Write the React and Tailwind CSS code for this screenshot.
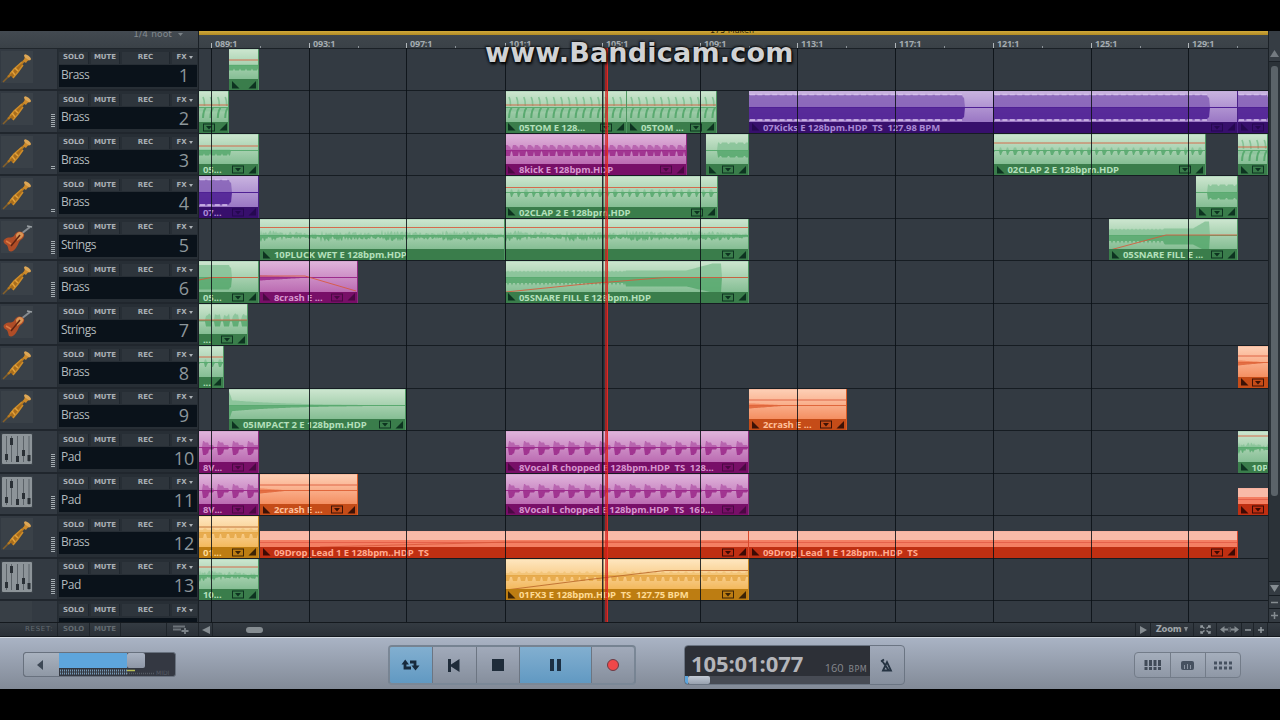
import React from 'react';

const tracks = [
  { name: 'Brass', icon: 'brass', level: 0 },
  { name: 'Brass', icon: 'brass', level: 7 },
  { name: 'Brass', icon: 'brass', level: 2 },
  { name: 'Brass', icon: 'brass', level: 2 },
  { name: 'Strings', icon: 'strings', level: 7 },
  { name: 'Brass', icon: 'brass', level: 8 },
  { name: 'Strings', icon: 'strings', level: 0 },
  { name: 'Brass', icon: 'brass', level: 0 },
  { name: 'Brass', icon: 'brass', level: 0 },
  { name: 'Pad', icon: 'pad', level: 7 },
  { name: 'Pad', icon: 'pad', level: 7 },
  { name: 'Brass', icon: 'brass', level: 8 },
  { name: 'Pad', icon: 'pad', level: 8 },
];

const palette = {
  green: {
    body: 'bg-gradient-to-b from-[#cbe5ce] to-[#85be94]',
    label: 'bg-[#3a7d4b] text-[#b4e0bb]',
    edge: 'border-[#4f9762]',
    up: '#86c296', down: '#5aaa70', ink: '#0d3320',
  },
  purple: {
    body: 'bg-gradient-to-b from-[#c8b2df] to-[#9a77c4]',
    label: 'bg-[#370f6c] text-[#a988d4]',
    edge: 'border-[#4a2188]',
    up: '#8560b6', down: '#4f2094', ink: '#250850',
  },
  magenta: {
    body: 'bg-gradient-to-b from-[#dfb3db] to-[#bb6bb2]',
    label: 'bg-[#780f68] text-[#d795ce]',
    edge: 'border-[#8d2a7e]',
    up: '#b45caa', down: '#9c2c8c', ink: '#4a0843',
  },
  orange: {
    body: 'bg-gradient-to-b from-[#fdceb4] to-[#f48f61]',
    label: 'bg-[#c54c18] text-[#ffc09a]',
    edge: 'border-[#d95c26]',
    up: '#f08357', down: '#e0673c', ink: '#3d1206',
  },
  red: {
    body: 'bg-gradient-to-b from-[#f9baa8] from-50% to-[#f47f63] to-55%',
    label: 'bg-[#bf2f12] text-[#ffab90]',
    edge: 'border-[#d9482c]',
    up: '#e5604a', down: '#e5604a', ink: '#3d0a04',
  },
  yellow: {
    body: 'bg-gradient-to-b from-[#fee5bd] to-[#f3b95c]',
    label: 'bg-[#bd7d12] text-[#ffdb94]',
    edge: 'border-[#c98a22]',
    up: '#f2c376', down: '#e6a949', ink: '#3c2406',
  },
};

// x is measured from the left edge of the timeline, line is the automation curve
const lanes = [
  [{ x: 30, w: 30, c: 'green', wave: 'under', line: [10], noMenu: true }],
  [
    { x: 0, w: 30, c: 'green', wave: 'tom', line: [13], open: true },
    { x: 306, w: 122, c: 'green', wave: 'tom', line: [13], text: '05TOM E 128...' },
    { x: 428, w: 90, c: 'green', wave: 'tom', line: [13], text: '05TOM ...' },
    { x: 550, w: 244.5, c: 'purple', wave: 'full', cut: 215, text: '07Kicks E 128bpm.HDP  TS  127.98 BPM', noMenu: true, noEnd: true },
    { x: 794.5, w: 244, c: 'purple', wave: 'full', cut: 215, open: true },
    { x: 1038.5, w: 31, c: 'purple', wave: 'full', cut: 31, noEnd: true },
  ],
  [
    { x: 0, w: 60, c: 'green', wave: 'under', cut: 31, line: [11], text: '05...', open: true },
    { x: 306, w: 182, c: 'magenta', wave: 'kick', text: '8kick E 128bpm.HDP' },
    { x: 507, w: 43, c: 'green', wave: 'block' },
    { x: 794.5, w: 212, c: 'green', wave: 'clap', line: [8], text: '02CLAP 2 E 128bpm.HDP' },
    { x: 1039, w: 30, c: 'green', wave: 'tom', line: [12], noEnd: true },
  ],
  [
    { x: 0, w: 60, c: 'purple', wave: 'full', cut: 32, text: '07...', open: true },
    { x: 306, w: 212.5, c: 'green', wave: 'clap', line: [10.5], text: '02CLAP 2 E 128bpm.HDP' },
    { x: 996.5, w: 42, c: 'green', wave: 'block' },
  ],
  [
    { x: 61, w: 245, c: 'green', wave: 'pluck', line: [7.5], text: '10PLUCK WET E 128bpm.HDP', noMenu: true, noEnd: true },
    { x: 306, w: 244, c: 'green', wave: 'pluck', line: [7.5], open: true },
    { x: 910, w: 128.5, c: 'green', wave: 'snare', cut: 100, line: [1, 30, 57, 15, 128, 15], text: '05SNARE FILL E ...' },
  ],
  [
    { x: 0, w: 60, c: 'green', wave: 'full', cut: 32, plain: true, line: [0, 18, 12, 15.5, 60, 15.5], text: '05...', open: true },
    { x: 61, w: 97.5, c: 'magenta', wave: 'crash', line: [0, 14, 45, 14, 96, 29], text: '8crash E ...' },
    { x: 306, w: 244, c: 'green', wave: 'snare', cut: 216, line: [1, 30, 80, 22, 160, 15.5, 244, 15.5], text: '05SNARE FILL E 128bpm.HDP' },
  ],
  [{ x: 0, w: 49, c: 'green', wave: 'wobble', line: [15], text: '...', open: true }],
  [
    { x: 0, w: 25, c: 'green', wave: 'clap', line: [10], text: '...', open: true, noMenu: true },
    { x: 1038.5, w: 31, c: 'orange', wave: 'crash', line: [9], noEnd: true },
  ],
  [
    { x: 30, w: 177, c: 'green', wave: 'impact', text: '05IMPACT 2 E 128bpm.HDP' },
    { x: 550, w: 98, c: 'orange', wave: 'crash', cut: 40, line: [10], text: '2crash E ...' },
  ],
  [
    { x: 0, w: 60, c: 'magenta', wave: 'vocal', text: '8V...', open: true },
    { x: 306, w: 244, c: 'magenta', wave: 'vocal', text: '8Vocal R chopped E 128bpm.HDP  TS  128...' },
    { x: 1038.5, w: 31, c: 'green', wave: 'pluck', line: [4], text: '10P', noMenu: true, noEnd: true },
  ],
  [
    { x: 0, w: 60, c: 'magenta', wave: 'vocal', text: '8V...', open: true },
    { x: 61, w: 97.5, c: 'orange', wave: 'crash', cut: 30, line: [10], text: '2crash E ...' },
    { x: 306, w: 244, c: 'magenta', wave: 'vocal', text: '8Vocal L chopped E 128bpm.HDP  TS  160...' },
    { x: 1038.5, w: 31, c: 'red', wave: 'none', short: true, noEnd: true },
  ],
  [
    { x: 0, w: 60, c: 'yellow', wave: 'fx', line: [10], text: '01...', open: true },
    { x: 61, w: 489, c: 'red', wave: 'none', short: true, line: [60, 15, 250, 10, 489, 10], text: '09Drop_Lead 1 E 128bpm..HDP  TS' },
    { x: 550, w: 488.5, c: 'red', wave: 'none', short: true, text: '09Drop_Lead 1 E 128bpm..HDP  TS' },
  ],
  [
    { x: 0, w: 60, c: 'green', wave: 'pluck', line: [7], text: '10...', open: true },
    { x: 306, w: 244, c: 'yellow', wave: 'fx', line: [1, 30, 80, 20, 160, 10.5, 244, 10.5], text: '01FX3 E 128bpm.HDP  TS  127.75 BPM' },
  ],
];

const bars = [
  [12, '089:1'], [110, '093:1'], [207, '097:1'], [306, '101:1'], [403, '105:1'], [501, '109:1'],
  [598, '113:1'], [696, '117:1'], [794, '121:1'], [892, '125:1'], [989, '129:1'],
];

const noise = (n) => {
  const v = Math.sin(n * 12.9898) * 43758.5453;
  return v - Math.floor(v);
};

// how far the waveform reaches above and below the centre line at x
const reach = (kind, x, w, cut) => {
  const end = cut || w;
  if (x > end) return [0, 0];
  switch (kind) {
    case 'clap': {
      const p = x % 7.4;
      return [p > 5 ? 3 : 0.4, p > 5 ? 4.5 : p < 1 ? 2 : 0.6];
    }
    case 'kick': {
      const p = x % 7.5;
      return p < 6 ? [p < 4 ? 5.5 : 4, 5.5] : [1.5, 1];
    }
    case 'full':
      return [x > end - 2 ? 10 : 12.5, x > end - 2 ? 10 : 12];
    case 'pluck': {
      const d = 1.3 - ((x % 61) / 61) * 0.8;
      return [noise(x) * 4.5 * d, 1 + noise(x + 40) * 4.5 * d];
    }
    case 'snare': {
      const t = x / end;
      const grow = t > 0.84 ? Math.min(1, (t - 0.84) / 0.12) : 0;
      const saw = t < 0.56 ? (x % 4 > 2 ? 0 : 2.5) : 0;
      return [7 + grow * 7 - saw * 0.4, (t < 0.56 ? 8 - saw : 9) + grow * 6];
    }
    case 'crash':
      return [2.2 * Math.max(0, 1 - x / Math.min(end, 50)), 3 * Math.max(0, 1 - x / Math.min(end, 50))];
    case 'impact':
      return [(x < 3 ? 14 - x * 2.5 : 5.5) * Math.exp(-x / 60), (x < 3 ? 15 - x * 3 : 6) * Math.exp(-x / 60)];
    case 'vocal': {
      const p = (x + 12) % 15.2;
      return p < 6 ? [p < 2 ? 6.5 : 5, p < 4 ? 7.5 : 6] : p < 11 ? [2.5, 2] : [0.5, 0.5];
    }
    case 'fx': {
      const p = x % 7.6;
      return [p < 5 ? 2.5 : 4, p < 5 ? 5.5 : 1.5];
    }
    case 'under':
      return [1, x % 6 < 4.5 ? 5 : 3];
    case 'wobble': {
      const p = (x + 2) % 9;
      return p < 6 && x > 3 ? [4 + noise(x) * 3, 6] : [0.5, 1];
    }
    case 'block':
      return x < 12 ? [0, 0] : [8 + (x % 8 > 5 ? -1.5 : 0), 7 + (x % 8 > 5 ? -1.5 : 0)];
    default:
      return [0, 0];
  }
};

const TomHits = ({ width, up, down }) => {
  const hits = [];
  for (let x = 4; x < width - 2; x += 7.4) hits.push(x);
  return (
    <g fill="none" strokeWidth="1.6">
      <path d={`M0 17.500H${width}`} stroke={up} strokeWidth="4" opacity="0.6" />
      <path d={hits.map((x) => `M${x.toFixed(1)} 5Q${(x + 1.5).toFixed(1)} 8 ${(x + 1.5).toFixed(1)} 14`).join('')} stroke={up} />
      <path d={hits.map((x) => `M${(x + 3).toFixed(1)} 16Q${(x + 0.5).toFixed(1)} 17 ${x.toFixed(1)} 26`).join('')} stroke={down} strokeWidth="2" />
    </g>
  );
};

const Waveform = ({ clip, height }) => {
  const { up, down } = palette[clip.c];
  const mid = clip.short ? 10.5 : 15.5;
  const tops = [];
  const bottoms = [];
  for (let x = 0; x <= clip.w; x += 1) {
    const [a, b] = reach(clip.wave, x, clip.w, clip.cut);
    tops.push(`${x},${(mid - a).toFixed(1)}`);
    bottoms.push(`${x},${(mid + b).toFixed(1)}`);
  }
  const { line } = clip;
  const points = line && (line.length === 1 ? `0,${line[0]} ${clip.w},${line[0]}` : line.join(' '));

  return (
    <svg className="block" width={clip.w} height={height}>
      <polygon points={`0,${mid} ${tops.join(' ')} ${clip.w},${mid}`} fill={up} opacity="0.85" />
      <polygon points={`0,${mid} ${bottoms.join(' ')} ${clip.w},${mid}`} fill={down} opacity="0.9" />
      {clip.wave === 'tom' && <TomHits width={clip.w} up={up} down={down} />}
      {clip.wave === 'full' && !clip.plain && (
        <g stroke="#d3bfea" strokeWidth="1.6" strokeDasharray="5 2.4">
          <path d={`M1 2.500H${clip.cut - 2}`} />
          <path d={`M1 28H${clip.cut - 2}`} />
        </g>
      )}
      <path d={`M0 ${mid}H${clip.w}`} stroke={down} strokeWidth="1" />
      {points && (
        <polyline points={points} fill="none" stroke={clip.c === 'yellow' ? '#b9662a' : '#d9573a'} strokeWidth="1" opacity="0.85" />
      )}
    </svg>
  );
};

const Clip = ({ clip }) => {
  const color = palette[clip.c];
  return (
    <div
      className={`absolute bottom-0 flex flex-col overflow-hidden border-r ${color.edge} ${clip.short ? 'h-[27px]' : 'h-[41.5px]'}`}
      style={{ left: clip.x, width: clip.w }}
    >
      <div className={`flex-1 overflow-hidden border-t border-white/40 ${color.body}`}>
        <Waveform clip={clip} height={clip.short ? 17 : 31} />
      </div>
      <div className={`flex h-[11px] shrink-0 items-center pr-[1px] ${color.label}`}>
        {!clip.open && (
          <svg className="ml-[3px] shrink-0" width="8" height="8">
            <path d="M0 0V7.500H7.500Z" fill={color.ink} />
          </svg>
        )}
        <span className={`min-w-0 flex-1 overflow-hidden whitespace-pre font-["Open_Sans",sans-serif] text-[9.5px] font-bold leading-[11px] tracking-[-0.1px] ${clip.open ? 'pl-[4px]' : 'pl-[3px]'}`}>
          {clip.text}
        </span>
        {!clip.noMenu && (
          <svg className="mr-[4px] shrink-0" width="12" height="9">
            <rect x="0.5" y="1" width="11" height="7" fill="none" stroke={color.ink} />
            <path d="M3 3H9L6 6.500Z" fill={color.ink} />
          </svg>
        )}
        {!clip.noEnd && (
          <svg className="shrink-0" width="9" height="8">
            <path d="M8 0V7.500H0.500Z" fill={color.ink} />
          </svg>
        )}
      </div>
    </div>
  );
};

const TrumpetIcon = () => (
  <svg width="32" height="32" viewBox="0 0 32 32" fill="none">
    <path d="M2 31L9 24" stroke="#85602a" strokeWidth="1.600" />
    <path d="M7 26L25 8" stroke="#b87a20" strokeWidth="2.400" />
    <path d="M9 24L13 18L20 12L22 14L16 22L12 27Z" fill="#a86c1c" />
    <path d="M9 23L13 18L21 11M12 27L17 21L22 14" stroke="#cc8c2a" strokeWidth="1.500" />
    <path d="M11 20L14 24M14 17L17 20" stroke="#e0a03a" strokeWidth="1.500" />
    <path d="M22 10C24 8 24 6 23 4L30 9C27 9 26 10 25 12Z" fill="#cc8a2c" />
    <ellipse cx="26.500" cy="6.200" rx="4" ry="1.700" transform="rotate(38 26.500 6.200)" fill="#dda757" />
  </svg>
);

const ViolinIcon = () => (
  <svg width="32" height="32" viewBox="0 0 32 32" fill="none">
    <path d="M20 13L29 6" stroke="#858b90" strokeWidth="2" />
    <path d="M26 5L31 6" stroke="#9aa0a5" strokeWidth="1.500" />
    <path d="M4 18C7 15 10 18 13 15C15 10 20 9 23 13C24 17 20 18 18 21C16 26 13 32 8 30C7 27 7 24 4 23C2 21 2 19 4 18Z" fill="#b04d27" />
    <path d="M15 14C17 9 22 11 22.500 14C21 18 18 18 16 20Z" fill="#d99555" />
    <path d="M10 25L19 14" stroke="#5d2413" strokeWidth="1.500" />
    <path d="M5 20L10 23" stroke="#dc7a44" strokeWidth="1.500" />
  </svg>
);

const MixerIcon = () => (
  <svg width="32" height="32" viewBox="0 0 32 32">
    <rect x="1" y="1" width="30" height="30" rx="1" fill="#8d9499" />
    <path d="M5.500 3V29M10.500 3V29M16.500 3V29M22.500 3V29M28 3V29" stroke="#5b6268" />
    <g fill="#2a3036">
      <rect x="4" y="21" width="3" height="6" />
      <rect x="9" y="5" width="3" height="7" />
      <rect x="15" y="23" width="3" height="6" />
      <rect x="21" y="17" width="3" height="6" />
      <rect x="26.500" y="22" width="3" height="6" />
    </g>
  </svg>
);

const icons = { brass: TrumpetIcon, strings: ViolinIcon, pad: MixerIcon };

const TrackButtons = () => (
  <div className="flex h-[14px] items-center gap-[2px] font-['DejaVu_Sans',sans-serif] text-[7px] font-bold leading-none text-[#aab0b5]">
    <span className="flex h-[12px] w-[30px] items-center justify-center border-r border-[#20272e] bg-[#2e353c]">SOLO</span>
    <span className="flex h-[12px] w-[29px] items-center justify-center border-r border-[#20272e] bg-[#2e353c]">MUTE</span>
    <span className="flex h-[12px] w-[48px] items-center justify-center border-r border-[#20272e] bg-[#2e353c]">REC</span>
    <span className="flex h-[12px] flex-1 items-center justify-center gap-[2px] bg-[#2e353c]">
      FX
      <svg width="4" height="3"><path d="M0 0H4L2 3Z" fill="#aab0b5" /></svg>
    </span>
  </div>
);

const TrackHeader = ({ track, number }) => {
  const Icon = icons[track.icon];
  return (
    <div className="flex h-[42.5px] shrink-0 border-b-2 border-[#20262d] bg-[#333a42]">
      <div className="flex w-[51px] pl-[1px] pt-[2px]">
        <div className="h-[32px] w-[32px] bg-[#3a4148]"><Icon /></div>
      </div>
      <div className="flex w-[7px] flex-col-reverse gap-px border-r border-[#242b32] pb-[5px]">
        {Array.from({ length: track.level }, (_, i) => (
          <div key={i} className="h-px w-[4px] bg-[#a3abb0]" />
        ))}
      </div>
      <div className="flex flex-1 flex-col bg-[#272e35] px-[1px] pt-[2px]">
        <TrackButtons />
        <div className="flex h-[22px] items-center bg-[#0a121a] pb-[2px] pl-[2px] font-['Open_Sans',sans-serif] text-[#b3babd]">
          <span className="flex-1 text-[12px] font-medium leading-none tracking-[-0.5px]">{track.name}</span>
          <span className="w-[26px] pt-px text-center text-[18px] leading-none text-[#8d969b]">{number}</span>
        </div>
      </div>
    </div>
  );
};

const TrackPanel = () => (
  <div className="flex w-[199px] flex-col overflow-hidden border-r border-[#1a2026] bg-[#333a42]">
    <div className="flex h-[17.5px] shrink-0 items-start justify-end gap-[6px] overflow-hidden border-b border-[#20262c] bg-gradient-to-b from-[#434a51] to-[#3a4147] pr-[15px]">
      <span className="-mt-[3px] font-['DejaVu_Sans',sans-serif] text-[9px] leading-[13px] tracking-[0.15px] text-[#848b90]">1/4 noot</span>
      <svg className="mt-[2px]" width="5" height="4"><path d="M0 0H5L2.500 3Z" fill="#7b8287" /></svg>
    </div>
    {tracks.map((track, i) => (
      <TrackHeader key={i} track={track} number={i + 1} />
    ))}
    <div className="flex h-[22px] shrink-0">
      <div className="w-[32px] bg-[#383f46]" />
      <div className="w-[26px] border-r border-[#242b32]" />
      <div className="flex-1 bg-[#272e35] px-[1px] pt-[2px]">
        <TrackButtons />
        <div className="mt-[1px] h-[4px] bg-[#0a121a]" />
      </div>
    </div>
  </div>
);

const Timeline = () => (
  <div className="relative flex w-[1069px] flex-col overflow-hidden bg-[#333a42]">
    <div className="h-[4px] shrink-0 overflow-hidden bg-gradient-to-b from-[#d0a93a] to-[#b18b25]">
      <p className="-mt-[6px] ml-[511px] font-['DejaVu_Sans',sans-serif] text-[8px] leading-[11px] text-[#2a220a]">175 Maken</p>
    </div>
    <div className="relative h-[13.5px] shrink-0 border-b border-[#1b2127] bg-gradient-to-b from-[#3f464c] to-[#3a4147]">
      {bars.map(([x, label]) => (
        <React.Fragment key={label}>
          <span className="absolute top-[4px] pl-[4px] font-['Open_Sans',sans-serif] text-[9px] font-bold leading-[9px] tracking-[-0.2px] text-[#a4abb0]" style={{ left: x }}>
            {label}
          </span>
          <span className="absolute bottom-0 h-[5px] w-px bg-[#b0b6ba]" style={{ left: x }} />
          <span className="absolute bottom-0 h-[2px] w-px bg-[#8d949a]" style={{ left: x + 49 }} />
        </React.Fragment>
      ))}
    </div>
    {lanes.map((clips, i) => (
      <div key={i} className="relative h-[42.5px] shrink-0 border-b border-[#161c22]">
        {clips.map((clip) => <Clip key={clip.x} clip={clip} />)}
      </div>
    ))}
    {/* Bar lines and playhead run over the clips */}
    {bars.map(([x]) => (
      <div key={x} className="absolute bottom-0 top-[17px] w-px bg-[#0b1015]/85" style={{ left: x }} />
    ))}
    <div className="absolute bottom-0 left-[404px] top-[17px] w-px bg-[#0b1015]/40" />
    <div className="absolute bottom-0 left-[406px] top-[17px] w-[3px] border-r border-[#f02a22]/80 bg-[#cc1e1c]/70" />
  </div>
);

const VerticalScroll = () => (
  <div className="flex w-[12px] flex-col items-center border-l border-[#1b2127] bg-[#2b3238]">
    <div className="flex h-[31px] w-full items-end justify-center border-b border-[#1b2127] bg-[#363d44] pb-[4px]">
      <svg width="9" height="7"><path d="M4.500 0L9 7H0Z" fill="#747b81" /></svg>
    </div>
    <div className="mt-[4px] h-[430px] w-[7px] rounded-[3px] bg-[#5b6369]" />
    <div className="flex-1" />
    <div className="flex h-[14px] w-full items-center justify-center border-t border-[#161c22] bg-[#343b42]">
      <svg width="9" height="7"><path d="M0 0H9L4.500 7Z" fill="#858c91" /></svg>
    </div>
    <div className="flex h-[13px] w-full items-center justify-center border-t border-[#161c22] bg-[#343b42]">
      <svg width="7" height="7"><path d="M0 3.500H7" stroke="#858c91" strokeWidth="1.500" /></svg>
    </div>
    <div className="flex h-[14px] w-full items-center justify-center border-t border-[#161c22] bg-[#343b42]">
      <svg width="7" height="7"><path d="M0 3.500H7M3.500 0V7" stroke="#858c91" strokeWidth="1.500" /></svg>
    </div>
  </div>
);

const BottomBar = () => (
  <div className="flex h-[15px] shrink-0 items-stretch border-y border-[#14191e] bg-gradient-to-b from-[#343b42] to-[#2a3037] font-['DejaVu_Sans',sans-serif] text-[7px] leading-[13px] text-[#636b71]">
    <span className="w-[58px] border-r border-[#1e242a] pl-[25px] tracking-[0.7px]">RESET:</span>
    <span className="w-[32px] border-r border-[#1e242a] text-center font-bold">SOLO</span>
    <span className="w-[31px] border-r border-[#1e242a] text-center font-bold">MUTE</span>
    <span className="w-[46px] border-r border-[#1e242a]" />
    <span className="flex w-[32px] items-center justify-center border-r border-[#1e242a] pr-[4px]">
      <svg width="16" height="9">
        <path d="M0 1.500H12M0 4.500H8" stroke="#6c7379" strokeWidth="2" />
        <path d="M8.500 6H15.500M12 3V9" stroke="#7c8389" strokeWidth="1.800" />
      </svg>
    </span>
    <span className="flex w-[14px] items-center justify-center border-r border-[#1e242a]">
      <svg width="8" height="8"><path d="M8 0V8L0 4Z" fill="#858c91" /></svg>
    </span>
    <div className="flex flex-1 items-center pl-[33px]">
      <div className="h-[6px] w-[17px] rounded-[3px] bg-[#868d92]" />
    </div>
    <span className="flex w-[16px] items-center justify-center border-x border-[#1e242a]">
      <svg width="7" height="8"><path d="M0 0L7 4L0 8Z" fill="#858c91" /></svg>
    </span>
    <span className="flex w-[43px] items-center justify-center gap-[3px] border-r border-[#1e242a] text-[8.5px] font-bold tracking-[-0.3px] text-[#a0a6aa]">
      Zoom
      <svg width="4" height="5"><path d="M0 0H4L2 5Z" fill="#858c91" /></svg>
    </span>
    <span className="flex w-[23px] items-center justify-center border-r border-[#1e242a]">
      <svg width="11" height="9" fill="none" stroke="#92999e" strokeWidth="1.400">
        <path d="M1 3V1H3M8 1H10V3M10 6V8H8M3 8H1V6M2 1.500L4.500 3.500M9 1.500L6.500 3.500M2 7.500L4.500 5.500M9 7.500L6.500 5.500" />
      </svg>
    </span>
    <span className="flex w-[24px] items-center justify-center">
      <svg width="19" height="7">
        <path d="M0 3.500L4.500 0V7ZM19 3.500L14.500 0V7Z" fill="#858c91" />
        <path d="M4 3.500H8M11 3.500H15" stroke="#858c91" strokeWidth="2.200" />
        <path d="M9 1V6M10.500 1V6" stroke="#70777d" strokeWidth="0.700" />
      </svg>
    </span>
    <span className="flex w-[13px] items-center justify-center border-x border-[#1e242a]">
      <svg width="6" height="6"><path d="M0 3H6" stroke="#92999e" strokeWidth="1.500" /></svg>
    </span>
    <span className="flex w-[14px] items-center justify-center border-r border-[#1e242a]">
      <svg width="6" height="6"><path d="M0 3H6M3 0V6" stroke="#92999e" strokeWidth="1.500" /></svg>
    </span>
    <span className="w-[12px]" />
  </div>
);

const Transport = () => (
  <div className="flex h-[52px] shrink-0 items-start border-t border-[#d5dbe3] bg-gradient-to-b from-[#a9b3c4] to-[#828a97]">
    {/* Master volume */}
    <div className="ml-[23px] mt-[14px] flex h-[25px] w-[153px] overflow-hidden rounded-[3px] border border-[#68717e] bg-[#343842]">
      <div className="flex w-[35px] items-center justify-center bg-gradient-to-b from-[#a9b2bf] to-[#8f98a5] pr-[3px]">
        <svg width="6" height="10"><path d="M6 0V10L0 5Z" fill="#3d4855" /></svg>
      </div>
      <div className="flex flex-1 flex-col">
        <div className="flex h-[15px]">
          <div className="w-[68px] bg-[#5ea5dc]" />
          <div className="w-[18px] rounded-[2px] bg-gradient-to-b from-[#aab3c2] to-[#8e97a7]" />
        </div>
        <div className="flex h-[8px] items-start pt-[1px]">
          <svg width="116" height="7">
            <path d="M1 1.500H68M1 4.500H68" stroke="#7699b5" strokeWidth="2" strokeDasharray="1 1" />
            <path d="M68 1.500H76" stroke="#b7bd55" strokeWidth="1.500" />
            <path d="M68 4.500H96" stroke="#555b64" strokeWidth="1.500" strokeDasharray="1 1" />
            <text x="97" y="6" fontFamily="DejaVu Sans, sans-serif" fontSize="6" fill="#565b65">MIDI</text>
          </svg>
        </div>
      </div>
    </div>

    {/* Playback */}
    <div className="ml-[212px] mt-[7px] flex h-[40px] w-[248px] divide-x divide-[#6c7582] overflow-hidden rounded-[4px] border-2 border-[#727f8f]/80 bg-gradient-to-b from-[#a1aaba] to-[#868f9d]">
      <div className="flex w-[43px] items-center justify-center bg-gradient-to-b from-[#82afd0] to-[#6199c2]">
        <svg width="20" height="12" viewBox="0 0 20 12">
          <path d="M4 5V9H10M9 3H14V7" fill="none" stroke="#172a3d" strokeWidth="2.800" />
          <path d="M0.500 5.500L4.200 0.500L8 5.500ZM10.500 6.500H18.500L14.500 11.500Z" fill="#172a3d" />
        </svg>
      </div>
      <div className="flex w-[44px] items-center justify-center pr-[2px]">
        <svg width="12" height="13"><path d="M0 0H3V5.500L11.500 0V13L3 7.500V13H0Z" fill="#1f2c3a" /></svg>
      </div>
      <div className="flex w-[43px] items-center justify-center">
        <div className="h-[12px] w-[12px] bg-[#1f2c3a]" />
      </div>
      <div className="flex w-[72px] items-center justify-center gap-[3px] bg-gradient-to-b from-[#82afd0] to-[#6199c2]">
        <div className="h-[12px] w-[4px] bg-[#1b2f43]" />
        <div className="h-[12px] w-[4px] bg-[#1b2f43]" />
      </div>
      <div className="flex flex-1 items-center justify-center">
        <div className="h-[12px] w-[12px] rounded-full border border-[#6b3b45] bg-[#f0484a]" />
      </div>
    </div>

    {/* Position and tempo */}
    <div className="ml-[48px] mt-[7px] flex h-[40px] w-[221px] overflow-hidden rounded-[4px] border border-[#6b7583] bg-gradient-to-b from-[#a1aaba] to-[#868f9d]">
      <div className="flex w-[185px] flex-col bg-[#2d3037] font-['Open_Sans',sans-serif]">
        <div className="flex h-[30px] items-center justify-between pl-[6px] pr-[3px] pt-[3px] leading-none text-[#b4b5ba]">
          <span className="text-[22px] font-bold tracking-[-0.1px]">105:01:077</span>
          <span className="pt-[6px] text-[#85878d]">
            <span className="mr-[5px] text-[11px]">160</span>
            <span className="font-['DejaVu_Sans',sans-serif] text-[8px] tracking-[0.4px]">BPM</span>
          </span>
        </div>
        <div className="flex h-[8px] bg-[#474b54]">
          <div className="w-[3px] bg-[#5ea5dc]" />
          <div className="w-[22px] rounded-[2px] bg-gradient-to-b from-[#c1c9d4] to-[#98a1af]" />
        </div>
      </div>
      <div className="flex flex-1 items-center justify-center pr-[2px]">
        <svg width="13" height="14" fill="none" stroke="#253342" strokeWidth="1.800">
          <path d="M3 12.500L7 4L11 12.500ZM1.500 2L8.500 12M1 3.500L4 1.500" />
        </svg>
      </div>
    </div>

    {/* Panels */}
    <div className="ml-[229px] mt-[14px] flex h-[26px] w-[107px] divide-x divide-[#737c89] rounded-[4px] border border-[#737c89] bg-gradient-to-b from-[#a5aebc] to-[#8f98a6]">
      <div className="flex w-[36px] items-center justify-center">
        <svg width="18" height="10" stroke="#414b58" strokeWidth="3">
          <path d="M2 0V10M6.500 0V10M11 0V10M15.500 0V10" strokeDasharray="6 1 3 1" />
        </svg>
      </div>
      <div className="flex w-[35px] items-center justify-center pr-[1px]">
        <svg width="13" height="9">
          <rect width="13" height="9" rx="2" fill="#465160" />
          <path d="M3.500 4V8M6.500 3V8M9.500 4V8" stroke="#8b94a2" />
        </svg>
      </div>
      <div className="flex flex-1 items-center justify-center pr-[1px]">
        <svg width="18" height="9" stroke="#465160" strokeWidth="3" strokeDasharray="3 2">
          <path d="M0 2H18M0 7H18" />
        </svg>
      </div>
    </div>
  </div>
);

const App = () => {
  return (
    <div className="relative flex h-[720px] w-[1280px] flex-col overflow-hidden bg-black pt-[31px]">
      <div className="flex h-[658px] flex-col overflow-hidden">
        <div className="flex h-[591px] shrink-0">
          <TrackPanel />
          <Timeline />
          <VerticalScroll />
        </div>
        <BottomBar />
        <Transport />
      </div>

      {/* Watermark */}
      <p className="absolute left-[485px] top-[37px] whitespace-nowrap font-['DejaVu_Sans',sans-serif] text-[27px] font-bold leading-[32px] tracking-[0.2px] text-[#d0d2d4] [text-shadow:0_0_3px_#000,1px_2px_3px_#000,-1px_-1px_2px_#222]">
        www.Bandicam.com
      </p>
    </div>
  );
};

export default App;
